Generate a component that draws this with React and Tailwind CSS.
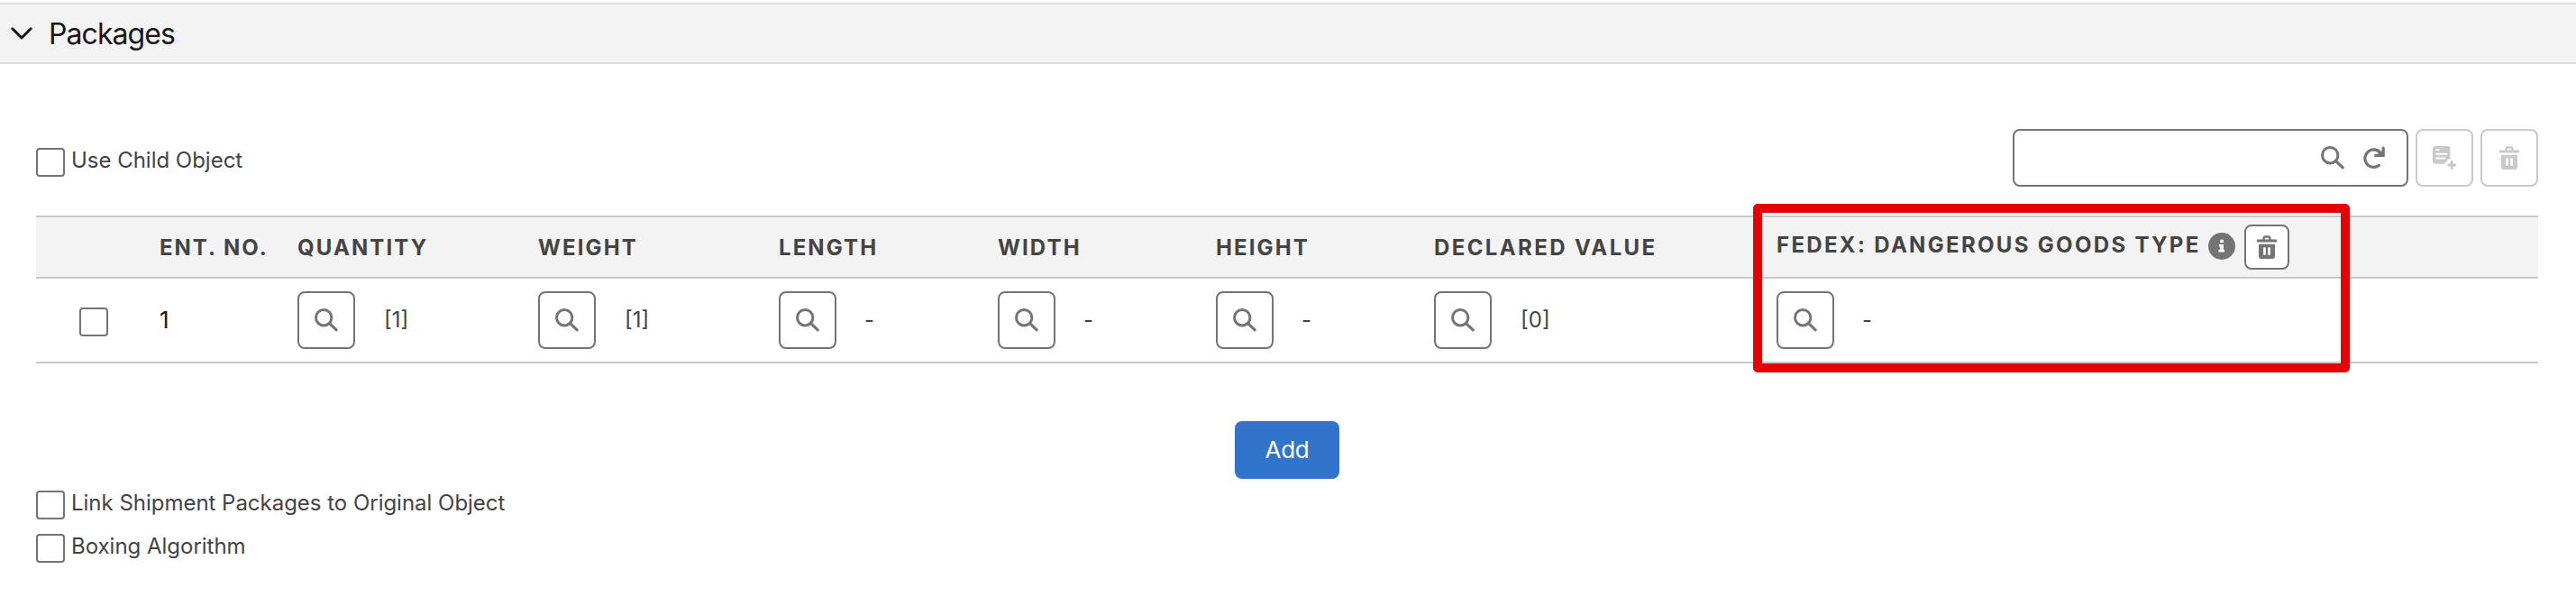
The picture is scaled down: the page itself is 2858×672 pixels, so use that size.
import React from "react";

function SearchIcon() {
  return (
    <svg className="size-[26px] shrink-0" viewBox="0 0 26 26" fill="none" stroke="currentColor">
      <circle cx="10.2" cy="10.2" r="8.7" strokeWidth="3" />
      <path d="M16.6 16.6 24.2 23.8" strokeWidth="3.2" strokeLinecap="round" />
    </svg>
  );
}

function RefreshIcon() {
  return (
    <svg className="size-[26px] shrink-0" viewBox="0 0 26 26" fill="none" stroke="currentColor" strokeWidth="3.2">
      <path d="M19.6 8.2A9.7 9.7 0 1 0 17.4 21.4" strokeLinecap="round" />
      <path d="M13.6 10.4h8.6V2.2" strokeLinecap="round" strokeLinejoin="miter" />
      <path d="M16.5 6.5l4.5-1v5h-4z" fill="currentColor" stroke="none" />
    </svg>
  );
}

function TrashIcon() {
  return (
    <svg className="size-[26px] shrink-0" viewBox="0 0 26 26" fill="none">
      <path d="M9.6 5V3.3a1.8 1.8 0 0 1 1.8-1.8h3.2a1.8 1.8 0 0 1 1.8 1.8V5" stroke="currentColor" strokeWidth="2.4" />
      <rect x="1.8" y="4.6" width="22.4" height="3" rx="1.2" fill="currentColor" />
      <path
        fill="currentColor"
        fillRule="evenodd"
        d="M5 9.8h16a1 1 0 0 1 1 1v12.1a3 3 0 0 1-3 3H7a3 3 0 0 1-3-3V10.8a1 1 0 0 1 1-1zM10 13.2a.9.9 0 0 0-.9.9v7a.9.9 0 0 0 .9.9h.9a.9.9 0 0 0 .9-.9v-7a.9.9 0 0 0-.9-.9zM15.1 13.2a.9.9 0 0 0-.9.9v7a.9.9 0 0 0 .9.9h.9a.9.9 0 0 0 .9-.9v-7a.9.9 0 0 0-.9-.9z"
      />
    </svg>
  );
}

function AddNoteIcon() {
  return (
    <svg className="size-[26px] shrink-0" viewBox="0 0 26 26" fill="none">
      <path
        fill="currentColor"
        d="M3 0h13.4a3 3 0 0 1 3 3v11.6h-1.6a2 2 0 0 0-2 2v1h-1a1.5 1.5 0 0 0-1.5 1.5v.6H3a3 3 0 0 1-3-3V3a3 3 0 0 1 3-3z"
      />
      <path d="M4.2 4.2h2.8M4.2 8.8h11.2M4.2 13.4h9.4" stroke="white" strokeWidth="2" strokeLinecap="round" />
      <path d="M21.2 17.6v7M17.7 21.1h7" stroke="currentColor" strokeWidth="3" strokeLinecap="round" />
    </svg>
  );
}

function InfoIcon() {
  return (
    <svg className="ml-2 mb-[2px] size-[30px] shrink-0" viewBox="0 0 30 30">
      <circle cx="15" cy="15" r="15" fill="#747474" />
      <circle cx="15.1" cy="9.5" r="2.1" fill="white" />
      <path d="M11.9 13h5.2v6h.9v2.4h-6.6V19h1.5v-3.6h-1z" fill="white" />
    </svg>
  );
}

function Checkbox() {
  return <span className="size-8 shrink-0 rounded-[4px] border-2 border-[#747474] bg-white" />;
}

function CheckboxRow({ label }) {
  return (
    <label className="flex h-8 items-center gap-[7px]">
      <Checkbox />
      <span className="mb-[4px] whitespace-nowrap text-[24px] leading-8 tracking-[-0.02px]">{label}</span>
    </label>
  );
}

const columns = [
  { label: "QUANTITY", value: "[1]", tracking: "tracking-[2.1px]" },
  { label: "WEIGHT", value: "[1]", tracking: "tracking-[2.1px]" },
  { label: "LENGTH", value: "-", tracking: "tracking-[2.1px]" },
  { label: "WIDTH", value: "-", tracking: "tracking-[2.1px]" },
  { label: "HEIGHT", value: "-", tracking: "tracking-[2.1px]" },
  { label: "DECLARED VALUE", value: "[0]", tracking: "tracking-[2.38px]" },
  { label: "FEDEX: DANGEROUS GOODS TYPE", value: "-", tracking: "tracking-[2.32px]", removable: true },
];

const gridCols = "grid grid-cols-[137px_153px_267px_267px_243px_242px_242px_380px_845px] items-center";

export default function App() {
  return (
    <div className="relative min-h-[672px] w-full bg-white pt-[3px] font-['Inter',sans-serif] text-[#444444]">
      <header className="flex h-[68px] items-center border-y-2 border-[#d8dde6] bg-[#f3f3f3] pl-3 text-[#181818]">
        <svg className="h-[14px] w-6" viewBox="0 0 24 14" fill="none">
          <path d="M1.8 1.8 12 12 22.2 1.8" stroke="currentColor" strokeWidth="3" strokeLinecap="round" strokeLinejoin="round" />
        </svg>
        <h2 className="ml-[18px] pt-[2px] text-[32px] leading-10 tracking-[-0.93px]">Packages</h2>
      </header>

      <main className="w-[2816px] pl-10 pt-[72px]">
        <div className="flex h-16 items-center justify-between">
          <div className="pt-[10px]">
            <CheckboxRow label="Use Child Object" />
          </div>
          <div className="flex gap-2">
            <div className="flex h-16 w-[439px] items-center justify-end gap-[21px] rounded-lg border-2 border-[#747474] pr-[22px] text-[#747474]">
              <SearchIcon />
              <RefreshIcon />
            </div>
            <button className="flex size-16 items-center justify-center rounded-lg border-2 border-[#c9c9c9] text-[#c9c9c9]">
              <AddNoteIcon />
            </button>
            <button className="flex size-16 items-center justify-center rounded-lg border-2 border-[#c9c9c9] text-[#c9c9c9]">
              <TrashIcon />
            </button>
          </div>
        </div>

        <section className="mt-8">
          <div className={`${gridCols} h-[70px] border-y-2 border-[#c9c9c9] bg-[#f3f3f3] text-[24px] font-bold leading-8`}>
            <span />
            <span className="whitespace-nowrap pt-[2px] tracking-[2px]">ENT. NO.</span>
            {columns.map((c) => (
              <div key={c.label} className="flex items-center whitespace-nowrap">
                <span className={c.removable ? `mb-[4px] ${c.tracking}` : `pt-[2px] ${c.tracking}`}>{c.label}</span>
                {c.removable && (
                  <>
                    <InfoIcon />
                    <button className="ml-[10px] flex size-[50px] items-center justify-center rounded-lg border-2 border-[#747474] bg-white text-[#747474]">
                      <TrashIcon />
                    </button>
                  </>
                )}
              </div>
            ))}
          </div>
          <div className={`${gridCols} h-[94px] border-b-2 border-[#c9c9c9] text-[24px] leading-8`}>
            <span className="flex pl-12 pt-1">
              <Checkbox />
            </span>
            <span className="text-[26px] text-[#181818]">1</span>
            {columns.map((c) => (
              <div key={c.label} className="flex items-center">
                <button className="flex size-16 items-center justify-center rounded-lg border-2 border-[#747474] text-[#747474]">
                  <SearchIcon />
                </button>
                <span className={c.value === "-" ? "ml-[31px]" : "ml-8"}>{c.value}</span>
              </div>
            ))}
          </div>
        </section>

        <div className="mt-16 flex pl-[1330px]">
          <button className="h-16 w-[116px] rounded-lg bg-[#3174cb] text-[26px] leading-8 tracking-[-0.3px] text-white">
            Add
          </button>
        </div>

        <div className="mt-[13px] flex flex-col gap-4">
          <CheckboxRow label="Link Shipment Packages to Original Object" />
          <CheckboxRow label="Boxing Algorithm" />
        </div>
      </main>

      <div className="pointer-events-none absolute left-[1945px] top-[226px] h-[187px] w-[662px] rounded-[5px] border-10 border-[#e60303]" />
    </div>
  );
}
